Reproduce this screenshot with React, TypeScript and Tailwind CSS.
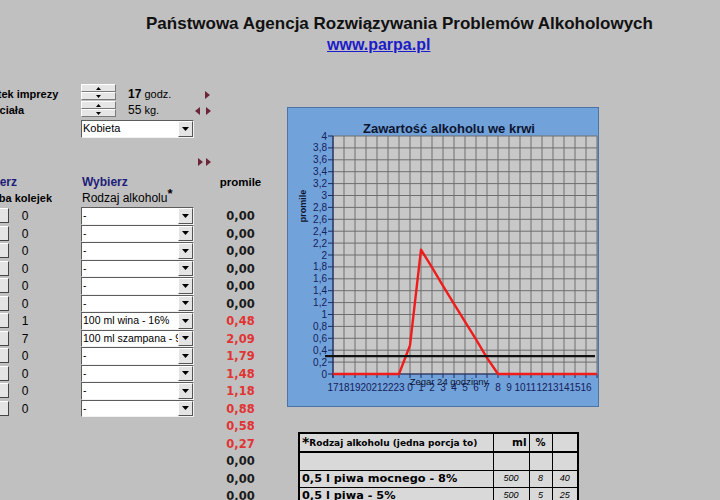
import React from 'react';

// Blood alcohol calculator sheet: inputs on the left, chart and portion table on the right.

const counts = [0, 0, 0, 0, 0, 0, 1, 7, 0, 0, 0, 0];
const drinks = ['-', '-', '-', '-', '-', '-', '100 ml wina - 16%', '100 ml szampana - 9%', '-', '-', '-', '-'];
const promile = ['0,00', '0,00', '0,00', '0,00', '0,00', '0,00', '0,48', '2,09', '1,79', '1,48', '1,18', '0,88', '0,58', '0,27', '0,00', '0,00', '0,00'];
const hours = [17, 18, 19, 20, 21, 22, 23, 0, 1, 2, 3, 4, 5, 6, 7, 8, 9, 10, 11, 12, 13, 14, 15, 16];
const curve = [0, 0, 0, 0, 0, 0, 0, 0.48, 2.09, 1.79, 1.48, 1.18, 0.88, 0.58, 0.27, 0, 0, 0, 0, 0, 0, 0, 0, 0, 0];

const Tri = ({ dir }: { dir: 'l' | 'r' }) => (
  <svg width="5" height="8" viewBox="0 0 5 8">
    <polygon points={dir === 'r' ? '0,0 5,4 0,8' : '5,0 0,4 5,8'} fill="#6b2438" />
  </svg>
);

const Spinner = () => (
  <div className="flex flex-col w-[35px] h-[16px] shrink-0">
    {['up', 'down'].map((d) => (
      <div
        key={d}
        className="h-[8px] bg-[#e6e6e6] border border-t-white border-l-white border-r-[#7a7a7a] border-b-[#7a7a7a] flex items-center justify-center"
      >
        <svg width="5" height="3" viewBox="0 0 5 3">
          <polygon points={d === 'up' ? '2.5,0 5,3 0,3' : '0,0 5,0 2.5,3'} fill="#000" />
        </svg>
      </div>
    ))}
  </div>
);

const Combo = ({ text, tall }: { text: string; tall?: boolean }) => (
  <div
    className={`w-[113px] ${tall ? 'h-[18px]' : 'h-[17.5px]'} flex bg-white border border-t-[#5c5c5c] border-l-[#5c5c5c] border-r-[#f2f2f2] border-b-[#f2f2f2] shrink-0`}
  >
    <div
      className={`flex-1 overflow-hidden whitespace-nowrap ${tall ? 'text-[11px]' : 'text-[10.5px]'} leading-[15px] pl-[1px] text-black`}
    >
      {text}
    </div>
    <div className="w-[15px] bg-[#e4e4e4] border border-t-white border-l-white border-r-[#555] border-b-[#555] flex items-center justify-center">
      <svg width="7" height="4" viewBox="0 0 7 4">
        <polygon points="0,0 7,0 3.5,4" fill="#000" />
      </svg>
    </div>
  </div>
);

const Chart = () => {
  const x0 = 46;
  const y0 = 267;
  const unit = 59.5;
  const cw = 11;
  const yLabel = (j: number) => (j / 5).toFixed(1).replace('.0', '').replace('.', ',');
  const pts = curve.map((v, i) => `${x0 + i * cw},${y0 - v * unit}`).join(' ');
  return (
    <svg width="312" height="300" viewBox="0 0 312 300" className="block">
      <rect x="0.5" y="0.5" width="311" height="299" fill="#72a2da" stroke="#4c72a6" />
      <text x="162" y="26" textAnchor="middle" fontFamily="Liberation Sans, Arial, sans-serif" fontWeight="bold" fontSize="13" fill="#0c1430">
        Zawartość alkoholu we krwi
      </text>
      <rect x={x0} y={29} width={264} height={238} fill="#c8c8c8" />
      {Array.from({ length: 25 }, (_, i) => (
        <line key={`v${i}`} x1={x0 + i * cw} y1={29} x2={x0 + i * cw} y2={y0} stroke="#6e6e6e" strokeWidth="1" />
      ))}
      {Array.from({ length: 21 }, (_, j) => (
        <line key={`h${j}`} x1={x0} y1={y0 - j * 11.9} x2={310} y2={y0 - j * 11.9} stroke="#6e6e6e" strokeWidth="1" />
      ))}
      {/* axes */}
      <line x1={x0} y1={29} x2={x0} y2={y0 + 4} stroke="#1c2a60" strokeWidth="1.2" />
      <line x1={x0} y1={y0} x2={310} y2={y0} stroke="#1c2a60" strokeWidth="1.2" />
      {Array.from({ length: 21 }, (_, j) => (
        <g key={`yl${j}`}>
          <line x1={41} y1={y0 - j * 11.9} x2={x0} y2={y0 - j * 11.9} stroke="#1c2a60" />
          <text
            x={40}
            y={y0 - j * 11.9 + 3.5}
            textAnchor="end"
            fontFamily="Liberation Sans, Arial, sans-serif"
            fontSize="10"
            fill="#14205a"
          >
            {yLabel(j)}
          </text>
        </g>
      ))}
      {hours.map((h, i) => (
        <g key={`xl${i}`}>
          <line x1={x0 + i * cw} y1={y0} x2={x0 + i * cw} y2={y0 + 4} stroke="#1c2a60" />
          <text
            x={x0 + i * cw}
            y={284}
            textAnchor="middle"
            fontFamily="Liberation Sans, Arial, sans-serif"
            fontSize="10"
            fill="#14205a"
          >
            {h}
          </text>
        </g>
      ))}
      <line x1={310} y1={y0} x2={310} y2={y0 + 4} stroke="#1c2a60" />
      <text x="162" y="278" textAnchor="middle" fontFamily="Liberation Sans, Arial, sans-serif" fontSize="9.5" fill="#0c1430">
        Zegar 24 godzinny
      </text>
      <text
        x="0"
        y="0"
        transform="translate(18.5 99) rotate(-90)"
        textAnchor="middle"
        fontFamily="Liberation Sans, Arial, sans-serif"
        fontWeight="bold"
        fontSize="9"
        fill="#0c1430"
      >
        promile
      </text>
      <polyline points={pts} fill="none" stroke="#f01c1c" strokeWidth="2.4" strokeLinejoin="round" />
      <line x1={38} y1={y0 - 0.3 * unit} x2={308} y2={y0 - 0.3 * unit} stroke="#111" strokeWidth="2.4" />
    </svg>
  );
};

const PortionTable = () => (
  <table className="ml-[11px] mt-[25px] w-[279px] border-collapse border-2 border-black bg-[#d9d9d9] table-fixed font-['DejaVu_Sans',sans-serif] text-black">
    <colgroup>
      <col className="w-[194px]" />
      <col className="w-[36px]" />
      <col className="w-[23px]" />
      <col className="w-[26px]" />
    </colgroup>
    <tbody>
      <tr className="h-[19px] border-b-2 border-black">
        <td className="border border-black px-[2px] whitespace-nowrap font-bold text-[9px] leading-[12px]">
          <span className="text-[14px] align-top leading-[10px]">*</span>Rodzaj alkoholu (jedna porcja to)
        </td>
        <td className="border border-black font-bold text-[10.5px] text-right pr-[2px]">ml</td>
        <td className="border border-black font-bold text-[10px] text-center">%</td>
        <td className="border border-black" />
      </tr>
      <tr className="h-[18px]">
        <td className="border border-black" />
        <td className="border border-black" />
        <td className="border border-black" />
        <td className="border border-black" />
      </tr>
      <tr className="h-[17px]">
        <td className="border border-black px-[2px] whitespace-nowrap font-bold text-[11.3px] leading-[15px]">0,5 l piwa mocnego - 8%</td>
        <td className="border border-black text-center italic text-[9px] font-['Liberation_Sans',sans-serif]">500</td>
        <td className="border border-black text-center italic text-[9px] font-['Liberation_Sans',sans-serif]">8</td>
        <td className="border border-black text-center italic text-[9px] font-['Liberation_Sans',sans-serif]">40</td>
      </tr>
      <tr className="h-[17px]">
        <td className="border border-black px-[2px] whitespace-nowrap font-bold text-[11.3px] leading-[15px]">0,5 l piwa - 5%</td>
        <td className="border border-black text-center italic text-[9px] font-['Liberation_Sans',sans-serif]">500</td>
        <td className="border border-black text-center italic text-[9px] font-['Liberation_Sans',sans-serif]">5</td>
        <td className="border border-black text-center italic text-[9px] font-['Liberation_Sans',sans-serif]">25</td>
      </tr>
    </tbody>
  </table>
);

export default function App() {
  return (
    <div className="w-[720px] h-[500px] overflow-hidden bg-[#c0c0c0] font-['Liberation_Sans',Arial,sans-serif] text-black">
      {/* heading */}
      <div className="h-[84px]">
        <div className="pt-[14px] pl-[146px] text-[17px] leading-[20px] font-bold whitespace-nowrap text-[#111]">
          Państwowa Agencja Rozwiązywania Problemów Alkoholowych
        </div>
        <div className="mt-[1px] pl-[327px] text-[16px] leading-[20px] font-bold">
          <span className="text-[#1c1cc8] underline">www.parpa.pl</span>
        </div>
      </div>

      <div className="flex items-start">
        {/* inputs */}
        <div className="w-[287px] shrink-0">
          <div className="flex items-start h-[17px]">
            <div className="w-[64px] h-[17px] overflow-hidden flex items-end shrink-0">
              <span className="-ml-[34px] shrink-0 whitespace-nowrap text-[11px] font-bold leading-[14px]">Początek imprezy</span>
            </div>
            <div className="w-[17px] shrink-0" />
            <Spinner />
            <div className="w-[77px] pl-[12px] h-[17px] flex items-end shrink-0 text-[11px] leading-[14px] whitespace-nowrap">
              <span className="font-bold text-[12px]">17</span>&nbsp;godz.
            </div>
            <div className="w-[20px] h-[17px] flex items-center justify-end pr-[3px] pt-[5px]">
              <Tri dir="r" />
            </div>
          </div>
          <div className="flex items-start h-[17px]">
            <div className="w-[64px] h-[17px] overflow-hidden flex items-end shrink-0">
              <span className="-ml-[31px] shrink-0 whitespace-nowrap text-[11px] font-bold leading-[15px]">Masa ciała</span>
            </div>
            <div className="w-[17px] shrink-0" />
            <Spinner />
            <div className="w-[77px] pl-[12px] h-[17px] flex items-end shrink-0 text-[11px] leading-[15px] whitespace-nowrap">
              <span className="text-[12px]">55</span>&nbsp;kg.
            </div>
            <div className="w-[20px] h-[17px] flex items-center pl-[2px] gap-[6px] pt-[3px]">
              <Tri dir="l" />
              <Tri dir="r" />
            </div>
          </div>
          <div className="flex mt-[2px] h-[18px]">
            <div className="w-[81px] shrink-0" />
            <Combo text="Kobieta" tall />
          </div>
          <div className="flex mt-[20px] h-[8px]">
            <div className="w-[198px] shrink-0" />
            <div className="flex gap-[3px]">
              <Tri dir="r" />
              <Tri dir="r" />
            </div>
          </div>

          {/* column headers */}
          <div className="flex mt-[8px] h-[16px] items-center font-bold text-[12px] leading-[16px]">
            <div className="w-[17px] overflow-hidden flex justify-end shrink-0">
              <span className="shrink-0 whitespace-nowrap text-[#1e1e78]">Wybierz</span>
            </div>
            <div className="w-[65px] shrink-0" />
            <div className="w-[112px] text-[#1e1e78] shrink-0">Wybierz</div>
            <div className="w-[93px] text-center text-[11.5px]">promile</div>
          </div>
          <div className="flex h-[16px] items-center text-[12px] leading-[16px]">
            <div className="w-[52px] overflow-hidden flex justify-end shrink-0">
              <span className="shrink-0 whitespace-nowrap font-bold text-[11px]">Liczba kolejek</span>
            </div>
            <div className="w-[30px] shrink-0" />
            <div className="whitespace-nowrap">
              Rodzaj alkoholu<span className="font-bold text-[13px] relative top-[-4px]">*</span>
            </div>
          </div>

          {/* drink rows */}
          <div className="mt-[1px]">
            {promile.map((p, i) => (
              <div key={i} className="flex items-center h-[17.5px]">
                <div className="w-[81px] flex items-center shrink-0">
                  {i < counts.length && (
                    <>
                      <div className="w-[9px] h-[15px] bg-[#e4e4e4] border-r border-b border-r-[#444] border-b-[#444] border-t border-t-white" />
                      <div className="w-[32px] text-center text-[12px] leading-[15px] pt-[2px]">{counts[i]}</div>
                    </>
                  )}
                </div>
                <div className="w-[113px] shrink-0">{i < drinks.length && <Combo text={drinks[i]} />}</div>
                <div
                  className={`w-[93px] text-center font-bold font-['DejaVu_Sans',sans-serif] text-[11.5px] leading-[15px] pt-[2px] ${
                    i >= 6 && i <= 13 ? 'text-[#e03434]' : 'text-[#1a1a1a]'
                  }`}
                >
                  {p}
                </div>
              </div>
            ))}
          </div>
        </div>

        {/* chart and portions */}
        <div className="mt-[23px]">
          <Chart />
          <PortionTable />
        </div>
      </div>
    </div>
  );
}
